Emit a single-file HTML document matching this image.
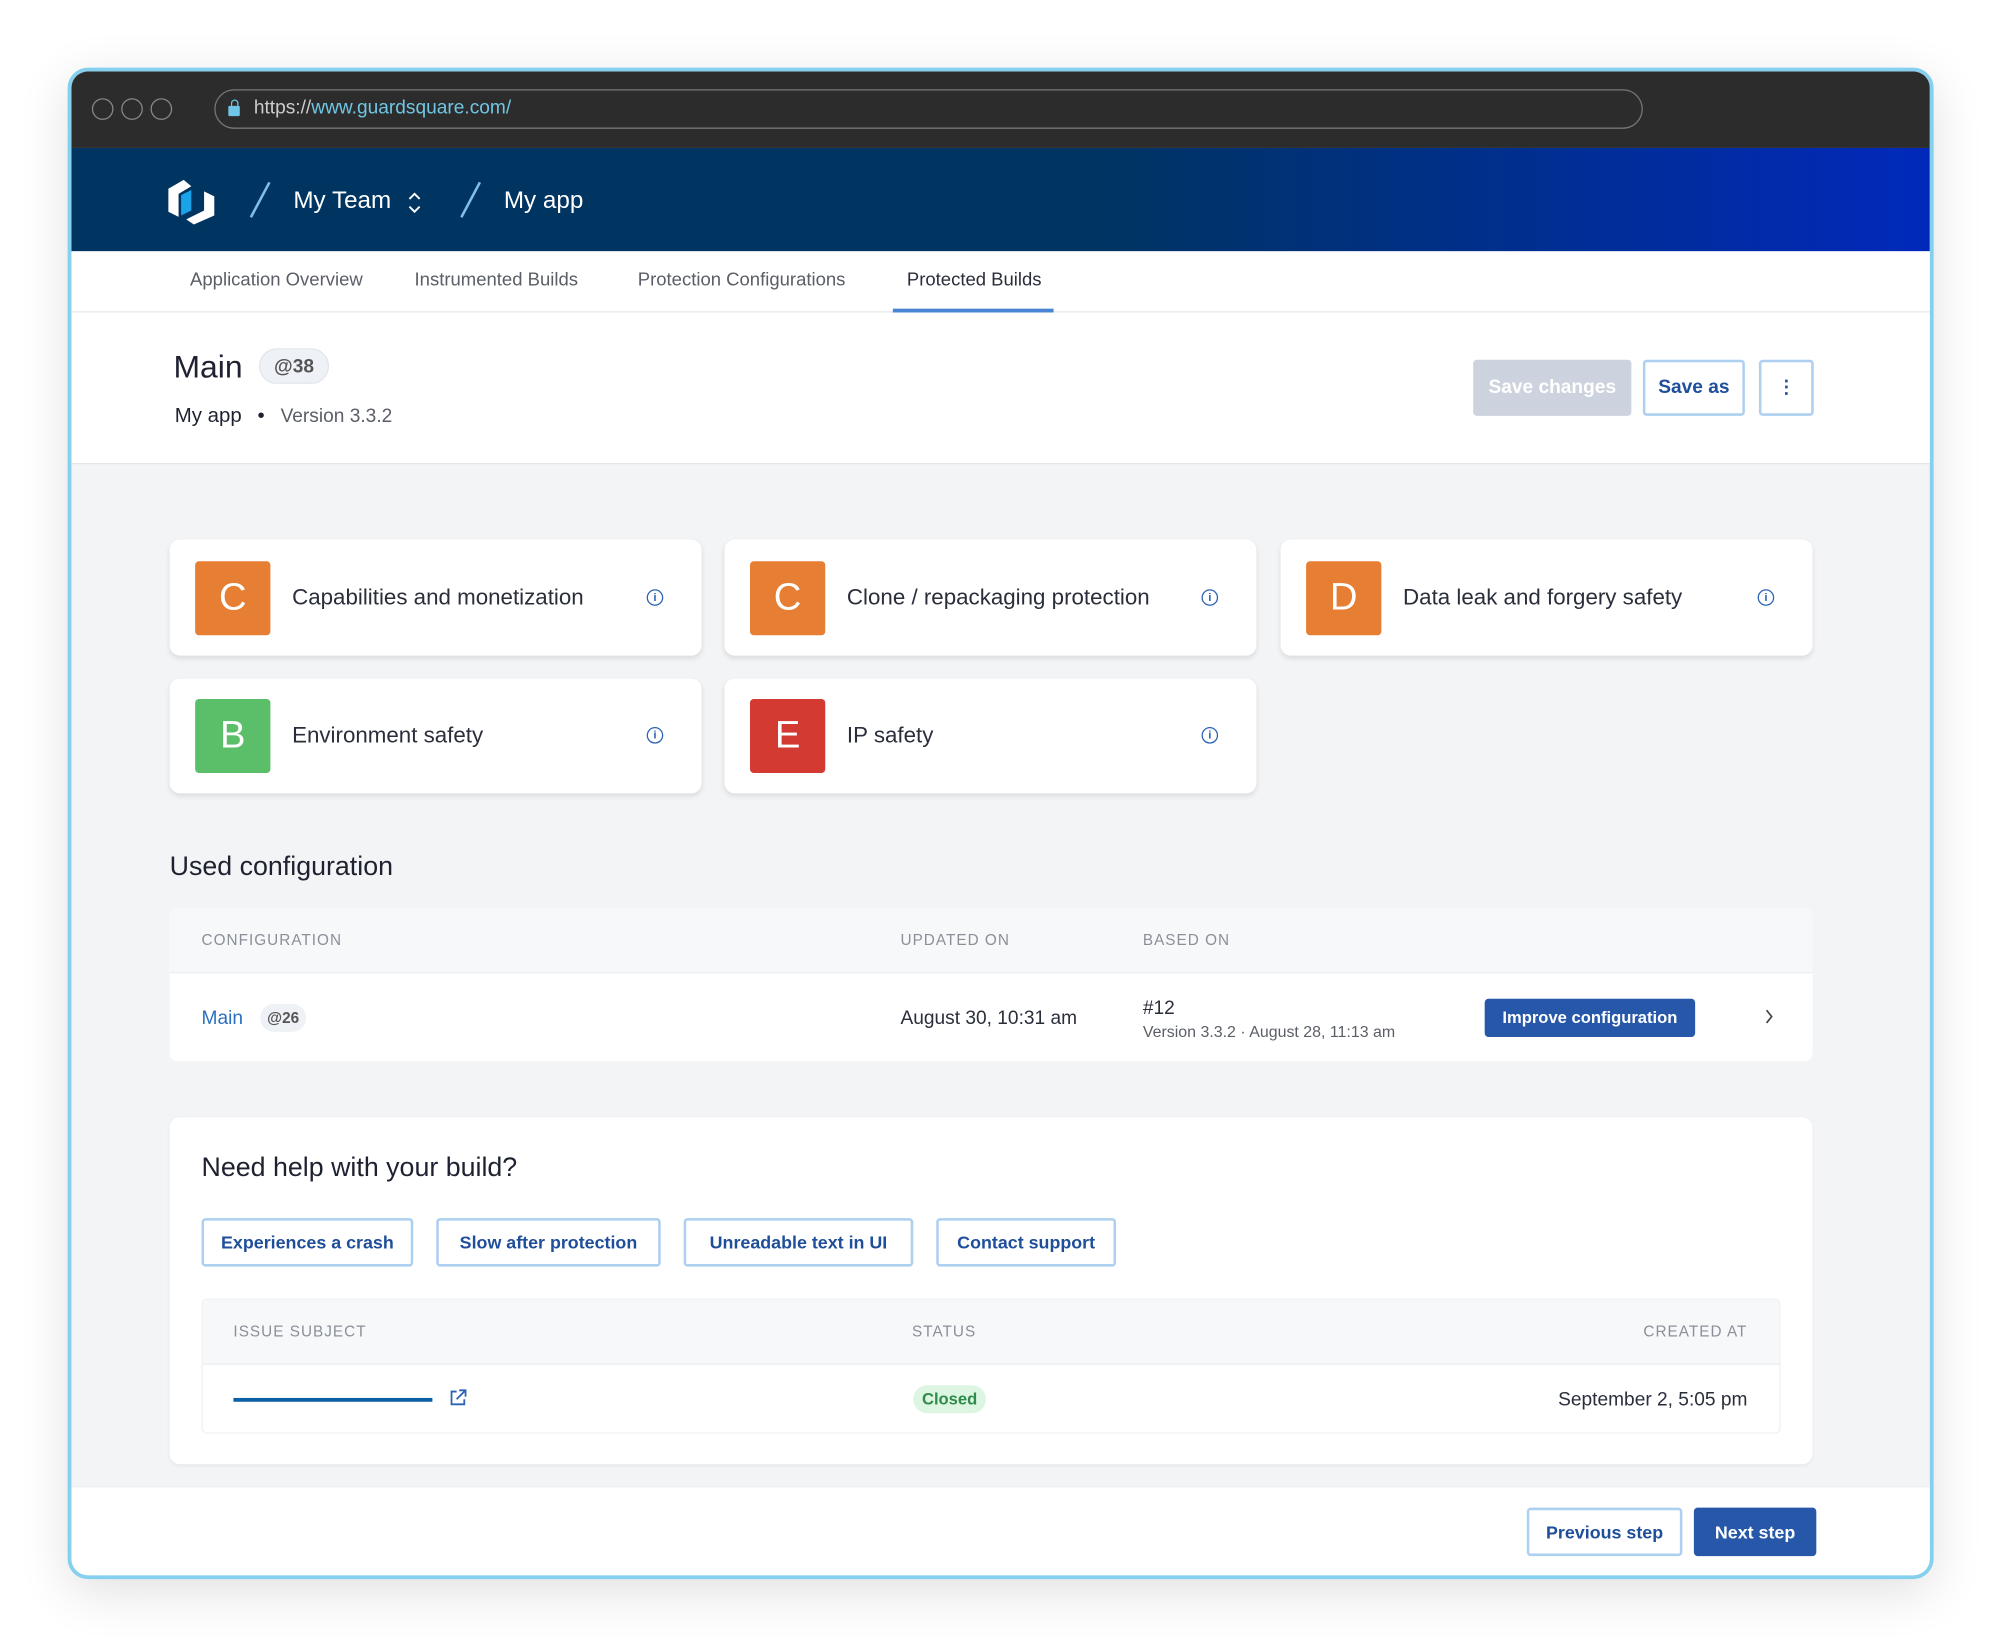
<!DOCTYPE html>
<html><head><meta charset="utf-8"><style>
*{box-sizing:border-box;margin:0;padding:0}
html,body{width:2000px;height:1646px;overflow:hidden;background:#fff}
body{font-family:"Liberation Sans",sans-serif;color:#2a2e3a}
#s{position:absolute;left:0;top:0;width:1568px;height:1291px;transform:scale(1.2755);transform-origin:0 0}
.a{position:absolute}
.frame{left:53px;top:53px;width:1463px;height:1185px;border:3px solid #84d0ee;border-radius:16px;overflow:hidden;background:#f3f4f6;box-shadow:0 10px 40px rgba(0,0,0,.12)}
.t{white-space:nowrap;line-height:1}
.card{background:#fff;border-radius:8px;box-shadow:0 2px 4px rgba(0,0,0,.1)}
.grade{width:59px;height:58px;border-radius:3px;color:#fff;font-size:30px;text-align:center;line-height:58px;font-weight:300}
.ctitle{font-size:17.5px;color:#2a2e3a}
.info{width:13px;height:13px;border:1.4px solid #2b62b3;border-radius:50%;color:#2b62b3;font-size:9px;text-align:center;line-height:11px;font-weight:bold}
.btn{border:2px solid #aed0f0;border-radius:3px;color:#1f4e9a;font-weight:bold;font-size:14px;text-align:center;background:#fff}
.hd{font-size:12px;color:#8a8f98;letter-spacing:.8px}
</style></head><body><div id="s">
<div class="a frame">
 <div class="a" style="left:0;top:0;width:1457px;height:60px;background:#2d2c2c"></div>
 <div class="a" style="left:16px;top:21px;width:17px;height:17px;border:1.3px solid #888;border-radius:50%"></div>
 <div class="a" style="left:39px;top:21px;width:17px;height:17px;border:1.3px solid #888;border-radius:50%"></div>
 <div class="a" style="left:62px;top:21px;width:17px;height:17px;border:1.3px solid #888;border-radius:50%"></div>
 <div class="a" style="left:112px;top:14px;width:1120px;height:31px;border:1.3px solid #777;border-radius:16px"></div>
 <div class="a" style="left:123px;top:27px;width:9px;height:8px;background:#6fc6e6;border-radius:1px"></div>
 <div class="a" style="left:124.5px;top:22px;width:6px;height:7px;border:1.5px solid #6fc6e6;border-bottom:none;border-radius:3px 3px 0 0"></div>
 <div class="a t" style="left:143px;top:21px;font-size:15px;color:#ccc">https://<span style="color:#6fc6e6">www.guardsquare.com/</span></div>
 <div class="a" style="left:0;top:60px;width:1457px;height:81px;background:linear-gradient(90deg,#003461 0%,#003461 55%,#0029bb 100%)"></div>
 <svg class="a" style="left:74px;top:83px" width="42" height="38" viewBox="0 0 42 38">
  <path d="M14 2 L20 7 L10 13 L10 31 L2 27 L2 9 Z" fill="#fff"/>
  <path d="M12 14 L20 10 L20 26 L12 30 Z" fill="#1aa3e8"/>
  <path d="M30 11 L38 15 L38 30 L22 37 L16 33 L30 26 Z" fill="#fff"/>
 </svg>
 <div class="a" style="left:147px;top:85px;width:1.5px;height:31px;background:#7fbfe8;transform:rotate(28deg)"></div>
 <div class="a t" style="left:174px;top:92px;font-size:19px;color:#fff">My Team</div>
 <svg class="a" style="left:263px;top:93px" width="12" height="20" viewBox="0 0 12 20"><path d="M2 7L6 3L10 7M2 13L6 17L10 13" fill="none" stroke="#fff" stroke-width="1.5"/></svg>
 <div class="a" style="left:312px;top:85px;width:1.5px;height:31px;background:#7fbfe8;transform:rotate(28deg)"></div>
 <div class="a t" style="left:339px;top:92px;font-size:19px;color:#fff">My app</div>
 <div class="a" style="left:0;top:141px;width:1457px;height:167px;background:#fff"></div>
 <div class="a" style="left:0;top:188px;width:1457px;height:1px;background:#e6e7ea"></div>
 <div class="a t" style="left:93px;top:157px;font-size:14.5px;color:#5a5e66">Application Overview</div>
 <div class="a t" style="left:269px;top:157px;font-size:14.5px;color:#5a5e66">Instrumented Builds</div>
 <div class="a t" style="left:444px;top:157px;font-size:14.5px;color:#5a5e66">Protection Configurations</div>
 <div class="a t" style="left:655px;top:157px;font-size:14.5px;color:#2a2e3a">Protected Builds</div>
 <div class="a" style="left:644px;top:186px;width:126px;height:3px;background:#4a84d4"></div>
 <div class="a t" style="left:80px;top:220px;font-size:25px;color:#1e2230">Main</div>
 <div class="a t" style="left:147px;top:217px;width:55px;height:28px;border:1px solid #e2e6ec;background:#eef1f5;border-radius:14px;font-size:15px;font-weight:bold;color:#555;text-align:center;line-height:27px">@38</div>
 <div class="a t" style="left:81px;top:263px;font-size:16px;color:#1e2230">My app <span style="margin:0 8px">•</span> <span style="color:#5a5e66;font-size:15px">Version 3.3.2</span></div>
 <div class="a t" style="left:1099px;top:226px;width:124px;height:44px;background:#cdd3de;border-radius:3px;color:#fff;font-weight:bold;font-size:15px;text-align:center;line-height:44px">Save changes</div>
 <div class="a t btn" style="left:1232px;top:226px;width:80px;height:44px;line-height:40px;font-size:15px">Save as</div>
 <div class="a t btn" style="left:1323px;top:226px;width:43px;height:44px;line-height:38px">&#8942;</div>
 <div class="a" style="left:0;top:307px;width:1457px;height:1px;background:#e3e5e8"></div>
 <div class="a card" style="left:77px;top:367px;width:417px;height:91px"><div class="a grade" style="left:20px;top:17px;background:#e67e33">C</div><div class="a t ctitle" style="left:96px;top:37px">Capabilities and monetization</div><div class="a info" style="left:374px;top:39px">i</div></div>
 <div class="a card" style="left:512px;top:367px;width:417px;height:91px"><div class="a grade" style="left:20px;top:17px;background:#e67e33">C</div><div class="a t ctitle" style="left:96px;top:37px">Clone / repackaging protection</div><div class="a info" style="left:374px;top:39px">i</div></div>
 <div class="a card" style="left:948px;top:367px;width:417px;height:91px"><div class="a grade" style="left:20px;top:17px;background:#e67e33">D</div><div class="a t ctitle" style="left:96px;top:37px">Data leak and forgery safety</div><div class="a info" style="left:374px;top:39px">i</div></div>
 <div class="a card" style="left:77px;top:476px;width:417px;height:90px"><div class="a grade" style="left:20px;top:16px;background:#5bbf6a">B</div><div class="a t ctitle" style="left:96px;top:36px">Environment safety</div><div class="a info" style="left:374px;top:38px">i</div></div>
 <div class="a card" style="left:512px;top:476px;width:417px;height:90px"><div class="a grade" style="left:20px;top:16px;background:#d23a32">E</div><div class="a t ctitle" style="left:96px;top:36px">IP safety</div><div class="a info" style="left:374px;top:38px">i</div></div>
 <div class="a t" style="left:77px;top:613px;font-size:21px;color:#1e2230">Used configuration</div>
 <div class="a" style="left:77px;top:656px;width:1288px;height:120px;background:#fff;border-radius:6px;overflow:hidden">
  <div class="a" style="left:0;top:0;width:1288px;height:51px;background:#f7f8fa;border-bottom:1px solid #eceef1"></div>
  <div class="a t hd" style="left:25px;top:19px">CONFIGURATION</div>
  <div class="a t hd" style="left:573px;top:19px">UPDATED ON</div>
  <div class="a t hd" style="left:763px;top:19px">BASED ON</div>
  <div class="a t" style="left:25px;top:79px;font-size:15px;color:#2a6fc0">Main</div>
  <div class="a t" style="left:71px;top:75px;width:36px;height:22px;background:#eef1f5;border-radius:11px;font-size:12px;font-weight:bold;color:#555;text-align:center;line-height:22px">@26</div>
  <div class="a t" style="left:573px;top:79px;font-size:15px;color:#2a2e3a">August 30, 10:31 am</div>
  <div class="a t" style="left:763px;top:71px;font-size:15px;color:#2a2e3a">#12</div>
  <div class="a t" style="left:763px;top:91px;font-size:12.5px;color:#5a5e66">Version 3.3.2 · August 28, 11:13 am</div>
  <div class="a t" style="left:1031px;top:71px;width:165px;height:30px;background:#2757a8;border-radius:3px;color:#fff;font-weight:bold;font-size:13px;text-align:center;line-height:30px">Improve configuration</div>
  <svg class="a" style="left:1250px;top:78px" width="8" height="14" viewBox="0 0 8 14"><path d="M2 2L6 7L2 12" fill="none" stroke="#444" stroke-width="1.3"/></svg>
 </div>
 <div class="a" style="left:77px;top:820px;width:1288px;height:272px;background:#fff;border-radius:8px;box-shadow:0 1px 3px rgba(0,0,0,.06)">
  <div class="a t" style="left:25px;top:29px;font-size:21px;color:#1e2230">Need help with your build?</div>
  <div class="a t btn" style="left:25px;top:79px;width:166px;height:38px;line-height:34px">Experiences a crash</div>
  <div class="a t btn" style="left:209px;top:79px;width:176px;height:38px;line-height:34px">Slow after protection</div>
  <div class="a t btn" style="left:403px;top:79px;width:180px;height:38px;line-height:34px">Unreadable text in UI</div>
  <div class="a t btn" style="left:601px;top:79px;width:141px;height:38px;line-height:34px">Contact support</div>
  <div class="a" style="left:25px;top:142px;width:1238px;height:106px;border:1px solid #eef0f3;border-radius:4px;overflow:hidden">
   <div class="a" style="left:0;top:0;width:1238px;height:51px;background:#f7f8fa;border-bottom:1px solid #eceef1"></div>
   <div class="a t hd" style="left:24px;top:19px">ISSUE SUBJECT</div>
   <div class="a t hd" style="left:556px;top:19px">STATUS</div>
   <div class="a t hd" style="right:25px;top:19px">CREATED AT</div>
   <div class="a" style="left:24px;top:77px;width:156px;height:3px;background:#0b5fa5"></div>
   <svg class="a" style="left:193px;top:70px" width="14" height="14" viewBox="0 0 14 14"><path d="M6 2H2v10h10V8M8 1h5v5M13 1L6 8" fill="none" stroke="#2b62b3" stroke-width="1.4"/></svg>
   <div class="a t" style="left:557px;top:67px;width:57px;height:22px;background:#dcf6e2;border-radius:11px;color:#2e8b4a;font-size:13px;font-weight:bold;text-align:center;line-height:22px">Closed</div>
   <div class="a t" style="right:25px;top:71px;font-size:15px;color:#2a2e3a">September 2, 5:05 pm</div>
  </div>
 </div>
 <div class="a" style="left:0;top:1109px;width:1457px;height:80px;background:#fff;border-top:1px solid #eceef1"></div>
 <div class="a t btn" style="left:1141px;top:1126px;width:122px;height:38px;line-height:34px">Previous step</div>
 <div class="a t" style="left:1272px;top:1126px;width:96px;height:38px;background:#2757a8;border-radius:3px;color:#fff;font-weight:bold;font-size:14px;text-align:center;line-height:38px">Next step</div>
</div>
</div></body></html>
